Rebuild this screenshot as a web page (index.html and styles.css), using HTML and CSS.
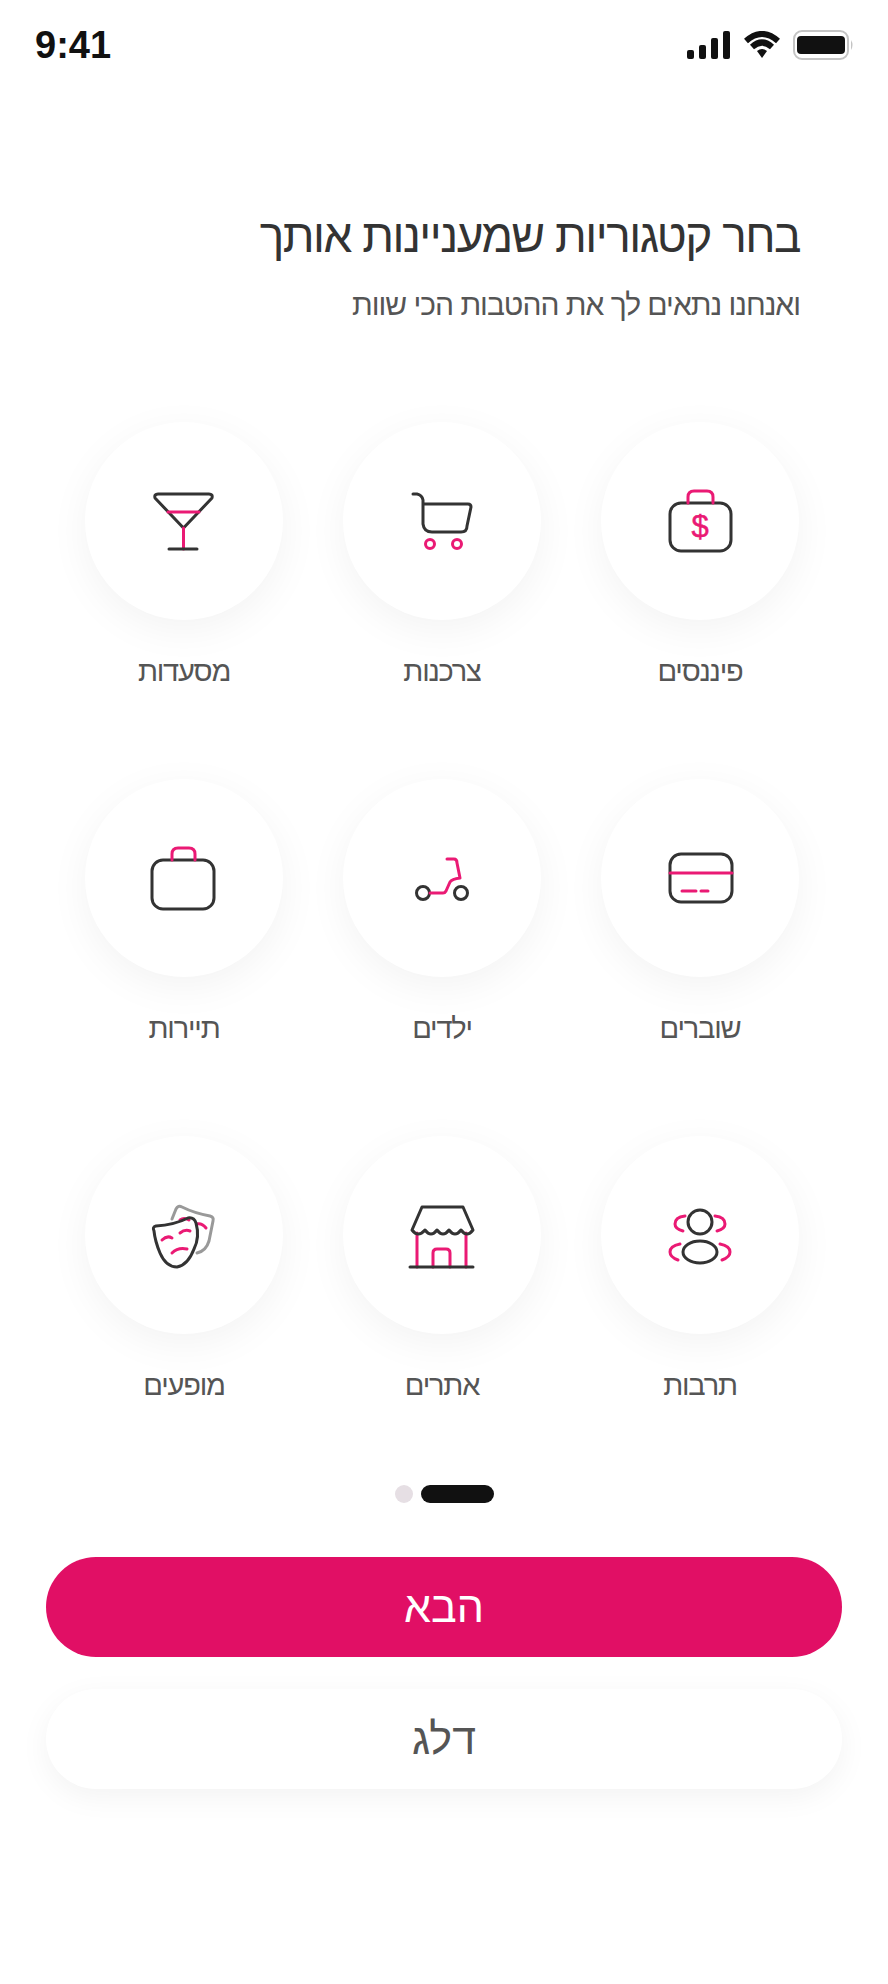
FILE: index.html
```html
<!DOCTYPE html>
<html lang="he" dir="rtl">
<head>
    <meta charset="UTF-8">
    <meta name="viewport" content="width=device-width, initial-scale=1.0">
    <title>בחר קטגוריות</title>
    <link rel="stylesheet" href="styles.css">
</head>
<body>
    <div class="status-bar" dir="ltr">
        <span class="time">9:41</span>
        <div class="status-icons">
            <svg width="44" height="28" viewBox="0 0 44 28">
                <rect x="0" y="19" width="7" height="9" rx="2" fill="#111"/>
                <rect x="12" y="14" width="7" height="14" rx="2" fill="#111"/>
                <rect x="24" y="7" width="7" height="21" rx="2" fill="#111"/>
                <rect x="36" y="0" width="7" height="28" rx="2" fill="#111"/>
            </svg>
            <svg width="36" height="28" viewBox="0 0 36 28">
                <path class="wifi" d="M2 10 Q18 -4 34 10"/>
                <path class="wifi" d="M8 16 Q18 7 28 16"/>
                <path d="M13 20 Q18 16 23 20 L18 27 Z" fill="#111"/>
            </svg>
            <svg width="62" height="30" viewBox="0 0 62 30">
                <rect x="1" y="1" width="54" height="28" rx="8" fill="none" stroke="#c4c4c4" stroke-width="2"/>
                <rect x="4" y="6" width="48" height="18" rx="4" fill="#111"/>
                <path d="M58 10 Q61 15 58 20 Z" fill="#c4c4c4"/>
            </svg>
        </div>
    </div>

    <div class="intro">
        <h1>בחר קטגוריות שמעניינות אותך</h1>
        <p>ואנחנו נתאים לך את ההטבות הכי שוות</p>
    </div>

    <div class="categories">
        <div class="category">
            <div class="circle">
                <svg width="80" height="80" viewBox="0 0 80 80">
                    <rect class="ink" x="10" y="22" width="61" height="48" rx="11"/>
                    <path class="pink" d="M28 22 V16 Q28 10 34 10 H47 Q53 10 53 16 V22"/>
                    <text class="dollar" x="40" y="56" dir="ltr">$</text>
                </svg>
            </div>
            <span>פיננסים</span>
        </div>
        <div class="category">
            <div class="circle">
                <svg width="80" height="80" viewBox="0 0 80 80">
                    <path class="ink" d="M11 13 H15 Q20 14 21 19 V43 Q22 51 30 51 H59 Q65 51 65 45 L69 26 Q69 23 66 23 H21"/>
                    <circle class="pink" cx="28" cy="63" r="4.500"/>
                    <circle class="pink" cx="55" cy="63" r="4.500"/>
                </svg>
            </div>
            <span>צרכנות</span>
        </div>
        <div class="category">
            <div class="circle">
                <svg width="80" height="80" viewBox="0 0 80 80">
                    <path class="ink" d="M14 13 H65 Q69 13 68 17 L39.500 47 L11 17 Q10 13 14 13 Z"/>
                    <path class="pink" d="M24 31 H55 M39.500 47 V68"/>
                    <path class="ink" d="M25 68 H53"/>
                </svg>
            </div>
            <span>מסעדות</span>
        </div>

        <div class="category">
            <div class="circle">
                <svg width="80" height="80" viewBox="0 0 80 80">
                    <rect class="ink" x="10" y="16" width="62" height="48" rx="11"/>
                    <path class="pink" d="M10 35 H72 M22 53 H36 M41 53 H48"/>
                </svg>
            </div>
            <span>שוברים</span>
        </div>
        <div class="category">
            <div class="circle">
                <svg width="80" height="80" viewBox="0 0 80 80">
                    <circle class="ink" cx="21" cy="55" r="6.500"/>
                    <circle class="ink" cx="59" cy="55" r="6.500"/>
                    <path class="pink" d="M45 21 H52 Q55 21 55 25 L58 40 Q50 41 48 44 L44 53 Q43 55 41 55 H28"/>
                </svg>
            </div>
            <span>ילדים</span>
        </div>
        <div class="category">
            <div class="circle">
                <svg width="80" height="80" viewBox="0 0 80 80">
                    <rect class="ink" x="8" y="22" width="62" height="49" rx="11"/>
                    <path class="pink" d="M28 22 V16 Q28 10 34 10 H45 Q51 10 51 16 V22"/>
                </svg>
            </div>
            <span>תיירות</span>
        </div>

        <div class="category">
            <div class="circle">
                <svg width="80" height="80" viewBox="0 0 80 80">
                    <circle class="ink" cx="40" cy="27" r="12"/>
                    <ellipse class="ink" cx="40" cy="57" rx="17" ry="11"/>
                    <path class="pink" d="M25 21 Q15 22 15 29 Q15 34 23 36 M55 21 Q65 22 65 29 Q65 34 57 36"/>
                    <path class="pink" d="M20 49 Q10 51 10 57 Q10 62 18 65 M60 49 Q70 51 70 57 Q70 62 62 65"/>
                </svg>
            </div>
            <span>תרבות</span>
        </div>
        <div class="category">
            <div class="circle">
                <svg width="80" height="80" viewBox="0 0 80 80">
                    <path class="pink" d="M15 38 V72 M64 38 V72 M31 72 V58 Q31 54 35 54 H44 Q48 54 48 58 V72"/>
                    <path class="ink" d="M20 12 H61 L71 35 Q65 43 59 35 Q53 43 47 35 Q41 43 35 35 Q29 43 23 35 Q16 43 10 35 Z"/>
                    <path class="ink" d="M8 72 H71"/>
                </svg>
            </div>
            <span>אתרים</span>
        </div>
        <div class="category">
            <div class="circle">
                <svg width="80" height="80" viewBox="0 0 80 80">
                    <path class="ink-light" d="M28 24 L32 14 Q34 10 38 12 Q50 18 66 21 Q70 22 69 26 L65 46 Q62 56 53 58"/>
                    <path class="pink" d="M36 25 Q40 22 45 25 M53 29 Q58 28 62 33"/>
                    <path class="ink" d="M10 36 Q8 32 12 31 Q30 30 44 23 Q50 22 52 28 Q56 42 50 54 Q44 70 33 72 Q22 72 16 58 Q11 46 10 36 Z"/>
                    <path class="pink" d="M18 45 Q23 40 28 43 M36 38 Q41 34 46 36 M28 58 Q34 52 43 54"/>
                </svg>
            </div>
            <span>מופעים</span>
        </div>
    </div>

    <div class="dots">
        <span class="dot active"></span>
        <span class="dot"></span>
    </div>

    <div class="actions">
        <button type="button" class="btn primary">הבא</button>
        <button type="button" class="btn secondary">דלג</button>
    </div>
</body>
</html>
```

FILE: styles.css
```css
/* Basic Styling */
body {
    font-family: "Liberation Sans", Arial, sans-serif;
    background: #fff;
    color: #333;
    margin: 0;
    padding: 0;
    width: 888px;
    height: 1984px;
    overflow: hidden;
}

/* Status bar */
.status-bar {
    height: 90px;
    padding: 0 33px 0 35px;
    display: flex;
    align-items: center;
    justify-content: space-between;
}
.time {
    font-size: 38px;
    font-weight: bold;
    color: #111;
}
.status-icons {
    display: flex;
    align-items: center;
    gap: 13px;
}
.wifi {
    fill: none;
    stroke: #111;
    stroke-width: 6;
}

/* Heading */
.intro {
    margin: 118px 88px 0 0;
}
.intro h1 {
    margin: 0;
    font-size: 46px;
    line-height: 56px;
    font-weight: normal;
    letter-spacing: -1.5px;
    color: #333;
}
.intro p {
    margin: 21px 0 0;
    font-size: 30px;
    line-height: 40px;
    letter-spacing: -1px;
    color: #555;
}

/* Category grid */
.categories {
    margin: 97px 89px 0 85px;
    display: grid;
    grid-template-columns: repeat(3, 198px);
    column-gap: 60px;
    row-gap: 88px;
}
.category {
    display: flex;
    flex-direction: column;
    align-items: center;
    gap: 31px;
    font-size: 29px;
    line-height: 40px;
    letter-spacing: -1.2px;
    color: #555;
}
.circle {
    width: 198px;
    height: 198px;
    border-radius: 50%;
    background: #fff;
    box-shadow: 0 10px 40px rgba(0, 0, 0, 0.05);
    display: flex;
    align-items: center;
    justify-content: center;
}
.ink, .ink-light, .pink {
    fill: none;
    stroke-width: 3;
    stroke-linecap: round;
    stroke-linejoin: round;
}
.ink {
    stroke: #333;
}
.ink-light {
    stroke: #999;
}
.pink {
    stroke: #ea1a74;
}
.dollar {
    font-family: "Liberation Sans", Arial, sans-serif;
    font-size: 31px;
    letter-spacing: 0;
    fill: #ea1a74;
    stroke: #ea1a74;
    stroke-width: 0.500;
    text-anchor: middle;
}

/* Pager */
.dots {
    margin-top: 80px;
    display: flex;
    justify-content: center;
    gap: 8px;
}
.dot {
    width: 18px;
    height: 18px;
    border-radius: 9px;
    background: #e6dfe4;
}
.dot.active {
    width: 73px;
    background: #111;
}

/* Buttons */
.actions {
    margin: 54px 46px 0;
    display: flex;
    flex-direction: column;
    gap: 32px;
}
.btn {
    height: 100px;
    border: none;
    border-radius: 50px;
    font-family: inherit;
    font-size: 43px;
    cursor: pointer;
}
.primary {
    background-color: #e10f65;
    color: #fff;
}
.secondary {
    background-color: #fff;
    color: #555;
    box-shadow: 0 8px 30px rgba(0, 0, 0, 0.05);
}
```
